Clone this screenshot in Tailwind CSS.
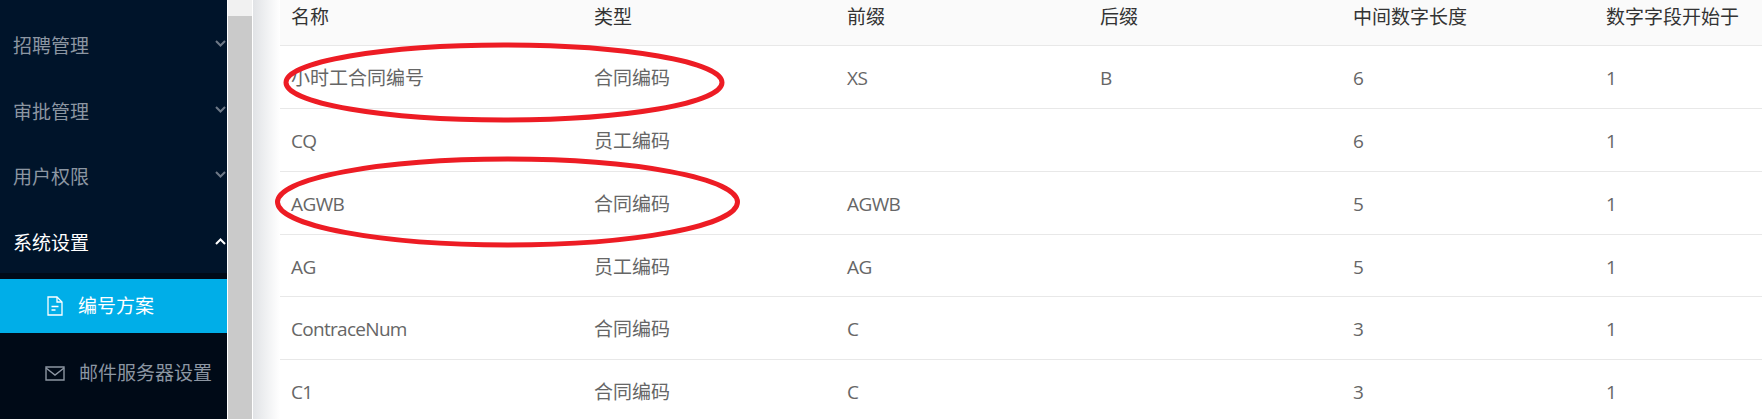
<!DOCTYPE html>
<html lang="zh-CN">
<head>
  <meta charset="UTF-8">
  <meta name="viewport" content="width=device-width, initial-scale=1.0">
  <title>编号方案</title>
  <script src="https://cdn.jsdelivr.net/npm/@tailwindcss/browser@4"></script>
</head>
<body class="bg-white">
  <div class="relative flex h-[419px] w-[1762px] overflow-hidden bg-white font-['Open_Sans','Noto_Sans_CJK_SC',sans-serif] text-[19px]">

    <!-- sidebar -->
    <aside class="w-[227px] shrink-0 bg-[#00142a] text-[#8c96a2]">
      <div class="flex h-[273px] flex-col pt-[13px]">
        <div class="flex h-[66px] shrink-0 items-center justify-between pl-[13px] pr-[1px]">
          <span>招聘管理</span>
          <svg class="mb-[6px] h-[7px] w-[11px] text-[#6d7886]" viewBox="0 0 11 7" fill="none" stroke="currentColor" stroke-width="2"><path d="M1 1l4.500 4.500L10 1"/></svg>
        </div>
        <div class="flex h-[66px] shrink-0 items-center justify-between pl-[13px] pr-[1px]">
          <span>审批管理</span>
          <svg class="mb-[6px] h-[7px] w-[11px] text-[#6d7886]" viewBox="0 0 11 7" fill="none" stroke="currentColor" stroke-width="2"><path d="M1 1l4.500 4.500L10 1"/></svg>
        </div>
        <div class="flex h-[65px] shrink-0 items-center justify-between pl-[13px] pr-[1px]">
          <span>用户权限</span>
          <svg class="mb-[6px] h-[7px] w-[11px] text-[#6d7886]" viewBox="0 0 11 7" fill="none" stroke="currentColor" stroke-width="2"><path d="M1 1l4.500 4.500L10 1"/></svg>
        </div>
        <div class="flex h-[66px] shrink-0 items-center justify-between pl-[13px] pr-[1px] text-white">
          <span>系统设置</span>
          <svg class="mb-[4px] h-[7px] w-[11px]" viewBox="0 0 11 7" fill="none" stroke="currentColor" stroke-width="2"><path d="M1 6l4.500-4.500L10 6"/></svg>
        </div>
      </div>
      <div class="h-[146px] bg-[#000a17] pt-[6px]">
        <div class="flex h-[54px] items-center bg-[#00aee8] pl-[47px] text-white">
          <svg class="h-[20px] w-[16px]" viewBox="0 0 16 20" fill="none" stroke="currentColor" stroke-width="1.300"><path d="M1 1h9l5 5v13H1z"/><path d="M10 1v5h5"/><path d="M4.500 10.500h7M4.500 14h4"/></svg>
          <span class="ml-[15px]">编号方案</span>
        </div>
        <div class="flex h-[80px] items-center pl-[45px]">
          <svg class="h-[15px] w-[20px]" viewBox="0 0 20 15" fill="none" stroke="currentColor" stroke-width="1.400"><path d="M1 1h18v13H1z"/><path d="M1 2l9 7 9-7"/></svg>
          <span class="ml-[14px]">邮件服务器设置</span>
        </div>
      </div>
    </aside>

    <!-- scrollbar -->
    <div class="ml-[1px] w-[24px] shrink-0 bg-[#f1f1f1] pt-[16px]">
      <div class="h-full bg-[#cacaca]"></div>
    </div>

    <!-- shadow strip next to the content -->
    <div class="ml-[1px] w-[27px] shrink-0 bg-gradient-to-r from-[#e1e3e6] to-white"></div>

    <!-- table -->
    <main class="min-w-0 flex-1">
      <table class="w-[1482px] table-fixed border-collapse text-left text-[#666]">
        <colgroup>
          <col class="w-[303px]"><col class="w-[253px]"><col class="w-[253px]"><col class="w-[253px]"><col class="w-[253px]"><col class="w-[167px]">
        </colgroup>
        <thead>
          <tr class="h-[45px] border-b border-[#e8e8e8] bg-[#fafafa] text-[#333]">
            <th class="pb-[11px] pl-[11px] font-normal">名称</th>
            <th class="pb-[11px] pl-[11px] font-normal">类型</th>
            <th class="pb-[11px] pl-[11px] font-normal">前缀</th>
            <th class="pb-[11px] pl-[11px] font-normal">后缀</th>
            <th class="pb-[11px] pl-[11px] font-normal">中间数字长度</th>
            <th class="pb-[11px] pl-[11px] font-normal">数字字段开始于</th>
          </tr>
        </thead>
        <tbody>
          <tr class="h-[63.700px] border-b border-[#e8e8e8]">
            <td class="pl-[11px] pt-[3px]">小时工合同编号</td><td class="pl-[11px] pt-[3px]">合同编码</td><td class="pl-[11px] pt-[3px] tracking-[-0.6px]">XS</td><td class="pl-[11px] pt-[3px]">B</td><td class="pl-[11px] pt-[3px]">6</td><td class="pl-[11px] pt-[3px]">1</td>
          </tr>
          <tr class="h-[62.700px] border-b border-[#e8e8e8]">
            <td class="pl-[11px] pt-[3px] tracking-[-0.6px]">CQ</td><td class="pl-[11px] pt-[3px]">员工编码</td><td class="pl-[11px] pt-[3px]"></td><td class="pl-[11px] pt-[3px]"></td><td class="pl-[11px] pt-[3px]">6</td><td class="pl-[11px] pt-[3px]">1</td>
          </tr>
          <tr class="h-[62.700px] border-b border-[#e8e8e8]">
            <td class="pl-[11px] pt-[3px] tracking-[-0.6px]">AGWB</td><td class="pl-[11px] pt-[3px]">合同编码</td><td class="pl-[11px] pt-[3px] tracking-[-0.6px]">AGWB</td><td class="pl-[11px] pt-[3px]"></td><td class="pl-[11px] pt-[3px]">5</td><td class="pl-[11px] pt-[3px]">1</td>
          </tr>
          <tr class="h-[62.700px] border-b border-[#e8e8e8]">
            <td class="pl-[11px] pt-[3px] tracking-[-0.6px]">AG</td><td class="pl-[11px] pt-[3px]">员工编码</td><td class="pl-[11px] pt-[3px] tracking-[-0.6px]">AG</td><td class="pl-[11px] pt-[3px]"></td><td class="pl-[11px] pt-[3px]">5</td><td class="pl-[11px] pt-[3px]">1</td>
          </tr>
          <tr class="h-[62.700px] border-b border-[#e8e8e8]">
            <td class="pl-[11px] pt-[3px] tracking-[-0.7px]">ContraceNum</td><td class="pl-[11px] pt-[3px]">合同编码</td><td class="pl-[11px] pt-[3px]">C</td><td class="pl-[11px] pt-[3px]"></td><td class="pl-[11px] pt-[3px]">3</td><td class="pl-[11px] pt-[3px]">1</td>
          </tr>
          <tr class="h-[62.700px]">
            <td class="pl-[11px] pt-[3px] tracking-[-0.6px]">C1</td><td class="pl-[11px] pt-[3px]">合同编码</td><td class="pl-[11px] pt-[3px]">C</td><td class="pl-[11px] pt-[3px]"></td><td class="pl-[11px] pt-[3px]">3</td><td class="pl-[11px] pt-[3px]">1</td>
          </tr>
        </tbody>
      </table>
    </main>

    <!-- red marks drawn over the screenshot -->
    <svg class="pointer-events-none absolute left-0 top-0 h-[419px] w-[1762px]" viewBox="0 0 1762 419" fill="none" stroke="#ed1c24" stroke-width="5">
      <ellipse cx="504" cy="82.500" rx="218" ry="37.500"/>
      <ellipse cx="507.500" cy="202" rx="230" ry="43"/>
    </svg>
  </div>
</body>
</html>
